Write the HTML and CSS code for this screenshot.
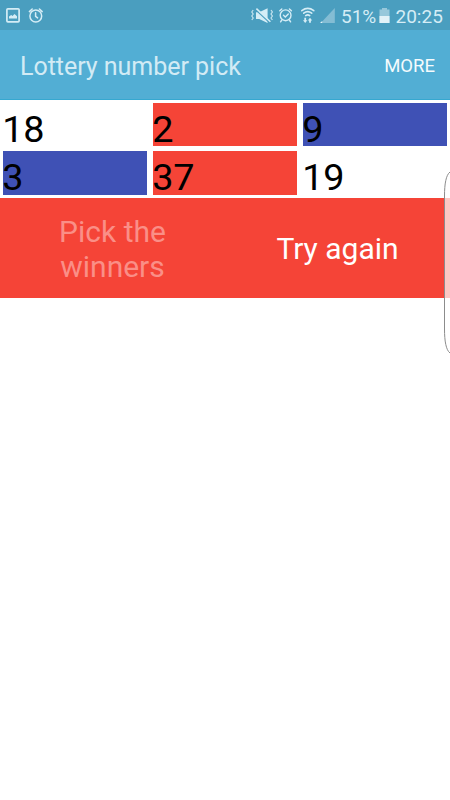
FILE: index.html
```html
<!DOCTYPE html>
<html lang="en">
<head>
<meta charset="utf-8">
<title>Lottery number pick</title>
<link rel="stylesheet" href="styles.css">
</head>
<body>
<div class="statusbar">
  <svg class="left-icons" width="50" height="30" viewBox="0 0 50 30">
    <rect x="6.9" y="8.8" width="12.2" height="13" rx="1" fill="none" stroke="#d5edf6" stroke-width="1.7"/>
    <path d="M9 18.5v-2l2.2-1.6 1.3 1 2-1.8 2.5 2.2v2.2z" fill="#d5edf6"/>
    <g fill="none" stroke="#d5edf6" stroke-width="1.5" stroke-linecap="round">
      <circle cx="35.8" cy="16" r="5.900"/><path d="M35.6 12.8v3.5l2 1.6M29.4 11.600l2.8-2.6M42.200 11.600l-2.8-2.6"/>
    </g>
  </svg>
  <svg class="right-icons" width="90" height="30" viewBox="250 0 90 30">
    <path d="M256 12.3h3.2l8.400-4v14.8l-8.400-4.2H256z" fill="#d5edf6"/>
    <path d="M255.5 9.500l14 13" stroke="#4a9ebf" stroke-width="1.4"/>
    <path d="M256.4 8.6l14 13.2" stroke="#d5edf6" stroke-width="1.5"/>
    <path d="M253.2 10l-1.4 2 1.4 2-1.4 2 1.4 2-1.4 2 M271 10l1.4 2-1.4 2 1.4 2-1.4 2 1.4 2" fill="none" stroke="#c5e3ee" stroke-width="1.2"/>
    <g fill="none" stroke="#d5edf6" stroke-width="1.4" stroke-linecap="round">
      <circle cx="285.6" cy="15.3" r="5.4"/><path d="M283.5 15.2l1.8 1.7 3-3M279.8 10.7l2-1.8M291.4 10.7l-2-1.8M281.8 20l-1.2 1.8M289.4 20l1.2 1.8"/>
      <path d="M301.8 10.700q6-4.600 12 0M303.7 13.2q4-3.2 8 0M305.7 15.6q2-1.5 4 0" stroke-width="1.6"/>
    </g>
    <path d="M303 20.2l2.2 2.8 2.2-2.8h-1.3V17.800h-1.800v2.4zM307.8 20.400l2.2-2.6 2.2 2.6h-1.3v2.4h-1.800v-2.4z" fill="#d5edf6"/>
    <path d="M334.8 8v15h-14z" fill="#84bdd4"/><path d="M322.2 21V23h-2.2z" fill="#e3f3f8"/>
  </svg>
  <span class="percent">51%</span>
  <svg class="battery" width="11" height="30" viewBox="0 0 11 30">
    <path d="M3 8h5v1.5h2.5V23H.5V9.500H3z" fill="#97c8db"/><path d="M.5 16h10v7H.5z" fill="#e2f2f8"/>
  </svg>
  <span class="clock">20:25</span>
</div>
<header class="appbar"><h1>Lottery number pick</h1><span class="more">MORE</span></header>
<main>
  <div class="grid">
    <div class="cell"><span>18</span></div>
    <div class="cell red"><span>2</span></div>
    <div class="cell blue"><span>9</span></div>
    <div class="cell blue"><span>3</span></div>
    <div class="cell red"><span>37</span></div>
    <div class="cell"><span>19</span></div>
  </div>
  <div class="actions">
    <div class="action disabled"><span>Pick the<br>winners</span></div>
    <div class="action"><span>Try again</span></div>
  </div>
</main>
<svg class="edge-handle" width="10" height="186" viewBox="0 0 10 186">
  <path d="M10 2C6 5 4.500 14 4.500 26V159C4.500 171 6 180 10 183" fill="#fff" fill-opacity=".7" stroke="#8c8c8c" stroke-width="1"/>
</svg>
</body>
</html>
```

FILE: styles.css
```css
* { box-sizing: border-box; }
body {
  margin: 0;
  height: 800px;
  overflow: hidden;
  background: #fff;
  font-family: Roboto, "Liberation Sans", sans-serif;
}
.statusbar {
  display: flex;
  height: 30px;
  background: #4a9ebf;
  color: #d5edf6;
  font-size: 19px;
  line-height: 33px;
  white-space: nowrap;
}
.statusbar svg { display: block; flex: none; }
.right-icons { margin-left: 200px; }
.percent { width: 39px; padding-left: 1px; }
.clock { margin-left: 5.500px; }
.appbar {
  display: flex;
  justify-content: space-between;
  height: 70px;
  padding: 0 15px 0 20px;
  background: #52aed4;
  border-bottom: 1px solid #36a8d0;
  line-height: 73px;
}
h1 {
  margin: 0;
  color: #d2ebf5;
  font-size: 25px;
  font-weight: 400;
  letter-spacing: -0.03px;
}
.more { color: #f5fbfd; font-size: 18.5px; line-height: 72px; }
.grid {
  display: grid;
  grid-template-columns: repeat(3, 144.400px);
  grid-template-rows: 43.500px 43.500px;
  gap: 5px 5.600px;
  padding: 2.500px 3px 3px;
}
.cell {
  color: #000;
  font-size: 37.800px;
  letter-spacing: -0.2px;
  line-height: 53px;
  text-indent: -0.7px;
}
.red { background: #f54437; }
.blue { background: #3f51b5; }
.actions {
  display: grid;
  grid-template-columns: 1fr 1fr;
  height: 100px;
  background: #f54437;
}
.action {
  display: flex;
  align-items: center;
  justify-content: center;
  padding-top: 2px;
  color: #fff;
  font-size: 30px;
  line-height: 35px;
  text-align: center;
}
.disabled { color: #fa8f87; }
.edge-handle {
  position: absolute;
  top: 170px;
  right: 0;
}
```
